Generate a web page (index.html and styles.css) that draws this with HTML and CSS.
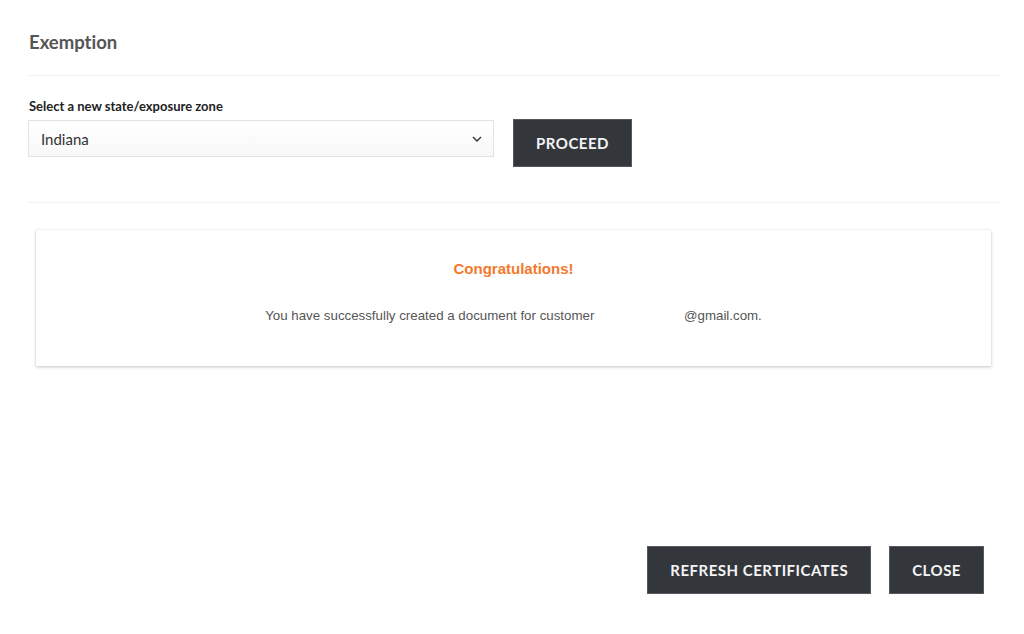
FILE: index.html
```html
<!DOCTYPE html>
<html lang="en">
<head>
<meta charset="utf-8">
<title>Exemption</title>
<link rel="stylesheet" href="styles.css">
</head>
<body>
<div class="page">
  <h1 class="title">Exemption</h1>
  <hr class="divider">
  <div class="zone">
    <label class="label">Select a new state/exposure zone</label>
    <div class="zone-row">
      <div class="select">
        <span class="select-value">Indiana</span>
        <svg class="chevron" width="10" height="6" viewBox="0 0 10 6"><path d="M1 1 L5 5 L9 1" fill="none" stroke="#333" stroke-width="1.4"/></svg>
      </div>
      <button class="btn">PROCEED</button>
    </div>
  </div>
  <hr class="divider divider-2">
  <div class="card">
    <div class="card-title">Congratulations!</div>
    <p class="card-text">You have successfully created a document for customer <span class="email">@gmail.com.</span></p>
  </div>
  <div class="footer">
    <button class="btn">REFRESH CERTIFICATES</button>
    <button class="btn">CLOSE</button>
  </div>
</div>
</body>
</html>
```
FILE: styles.css
```css
html, body {
  margin: 0;
  padding: 0;
  background: #fff;
}
.page {
  box-sizing: border-box;
  height: 634px;
  padding: 31px 24px 40px 28px;
  display: flex;
  flex-direction: column;
  font-family: Lato, "Liberation Sans", sans-serif;
  font-variant-ligatures: none;
}
.title {
  margin: 0 0 0 1px;
  font-size: 18.5px;
  line-height: 22px;
  font-weight: 700;
  color: #555;
}
.divider {
  margin: 22px 0 0;
  border: 0;
  height: 1px;
  background: #f2f2f2;
}
.zone {
  margin-top: 22px;
  display: flex;
  flex-direction: column;
}
.label {
  font-size: 13px;
  line-height: 16px;
  font-weight: 700;
  color: #222;
  margin-left: 1px;
}
.zone-row {
  margin-top: 5px;
  display: flex;
  align-items: flex-start;
  gap: 19px;
}
.select {
  box-sizing: border-box;
  width: 466px;
  height: 37px;
  margin-top: 1px;
  border: 1px solid #e2e2e2;
  background: linear-gradient(#ffffff, #f8f8f8);
  display: flex;
  align-items: center;
  justify-content: space-between;
  padding: 0 11px 0 12px;
}
.select-value {
  font-size: 15px;
  color: #333;
}
.chevron {
  display: block;
}
.btn {
  box-sizing: border-box;
  height: 48px;
  padding: 0 22px;
  border: 1px solid #55585c;
  background: #33373c;
  color: #f4f4f4;
  font-family: Lato, "Liberation Sans", sans-serif;
  font-size: 15px;
  font-weight: 700;
  letter-spacing: 0.5px;
  cursor: pointer;
}
.divider-2 {
  margin-top: 35px;
}
.card {
  margin: 27px 9px 0 8px;
  padding: 30px 20px 42px;
  background: #fff;
  box-shadow: 0 1px 3px rgba(0, 0, 0, 0.22), 0 0 2px rgba(0, 0, 0, 0.06);
  text-align: center;
  font-family: "Liberation Sans", Arial, sans-serif;
}
.card-title {
  font-size: 15px;
  line-height: 18px;
  font-weight: 700;
  color: #f4792c;
}
.card-text {
  margin: 30px 0 0;
  font-size: 13.3px;
  line-height: 16px;
  color: #555;
}
.email {
  padding-left: 86px;
}
.footer {
  margin-top: auto;
  display: flex;
  justify-content: flex-end;
  gap: 18px;
  padding-right: 16px;
}
```
